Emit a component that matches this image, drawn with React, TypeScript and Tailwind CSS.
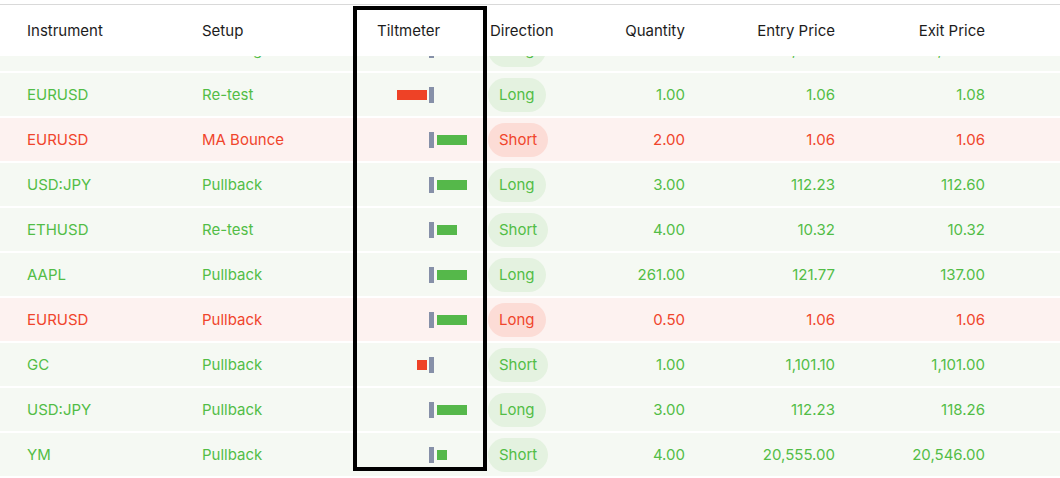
import React from "react";

type Row = {
  inst: string;
  setup: string;
  tilt: number; // negative = red left, positive = green right (px)
  dir: "Long" | "Short";
  qty: string;
  entry: string;
  exit: string;
  win: boolean;
};

const rows: Row[] = [
  { inst: "GC", setup: "Bull Flag", tilt: 10, dir: "Long", qty: "1.00", entry: "1,101.10", exit: "1,101.00", win: true },
  { inst: "EURUSD", setup: "Re-test", tilt: -30, dir: "Long", qty: "1.00", entry: "1.06", exit: "1.08", win: true },
  { inst: "EURUSD", setup: "MA Bounce", tilt: 30, dir: "Short", qty: "2.00", entry: "1.06", exit: "1.06", win: false },
  { inst: "USD:JPY", setup: "Pullback", tilt: 30, dir: "Long", qty: "3.00", entry: "112.23", exit: "112.60", win: true },
  { inst: "ETHUSD", setup: "Re-test", tilt: 20, dir: "Short", qty: "4.00", entry: "10.32", exit: "10.32", win: true },
  { inst: "AAPL", setup: "Pullback", tilt: 30, dir: "Long", qty: "261.00", entry: "121.77", exit: "137.00", win: true },
  { inst: "EURUSD", setup: "Pullback", tilt: 30, dir: "Long", qty: "0.50", entry: "1.06", exit: "1.06", win: false },
  { inst: "GC", setup: "Pullback", tilt: -10, dir: "Short", qty: "1.00", entry: "1,101.10", exit: "1,101.00", win: true },
  { inst: "USD:JPY", setup: "Pullback", tilt: 30, dir: "Long", qty: "3.00", entry: "112.23", exit: "118.26", win: true },
  { inst: "YM", setup: "Pullback", tilt: 10, dir: "Short", qty: "4.00", entry: "20,555.00", exit: "20,546.00", win: true },
];

function Tilt({ v }: { v: number }) {
  return (
    <div className="flex items-center">
      <div className="w-[50px] flex justify-end">
        {v < 0 && <div className="h-[10px] bg-[#ee4226]" style={{ width: -v }} />}
      </div>
      <div className="w-[5px] h-[16px] bg-[#8690a8] ml-[2px]" />
      <div className="ml-[3px] flex">
        {v > 0 && <div className="h-[10px] bg-[#55b84a]" style={{ width: v }} />}
      </div>
    </div>
  );
}

function DataRow({ r }: { r: Row }) {
  const text = r.win ? "text-[#52bd46]" : "text-[#f0452c]";
  const bg = r.win ? "bg-[#f5f9f3]" : "bg-[#fdf2f0]";
  const pill = r.win ? "bg-[#e4f2e0]" : "bg-[#fcdcd6]";
  return (
    <div className={`flex items-center h-[43px] mb-[2px] ${bg} ${text}`}>
      <div className="w-[202px] pl-[27px]">{r.inst}</div>
      <div className="w-[175px]">{r.setup}</div>
      <div className="w-[111px]">
        <Tilt v={r.tilt} />
      </div>
      <div className="w-[100px]">
        <span className={`inline-flex items-center h-[34px] px-[11px] rounded-full ${pill}`}>{r.dir}</span>
      </div>
      <div className="w-[97px] text-right">{r.qty}</div>
      <div className="w-[150px] text-right">{r.entry}</div>
      <div className="w-[150px] text-right">{r.exit}</div>
      <div className="flex-1" />
    </div>
  );
}

export default function App() {
  return (
    <div
      className="relative w-[1060px] h-[478px] bg-white overflow-hidden text-[15px] leading-none"
      style={{ fontFamily: "Inter, 'Noto Sans', sans-serif" }}
    >
      <div className="pt-[4px]">
        <div className="border-t border-[#d9d9d9]" />
        <div className="flex items-center h-[51px] text-[#1c1c1c] bg-white relative z-10">
          <div className="w-[202px] pl-[27px]">Instrument</div>
          <div className="w-[175px]">Setup</div>
          <div className="w-[111px]">Tiltmeter</div>
          <div className="w-[100px] pl-[2px]">Direction</div>
          <div className="w-[97px] text-right">Quantity</div>
          <div className="w-[150px] text-right">Entry Price</div>
          <div className="w-[150px] text-right">Exit Price</div>
          <div className="flex-1" />
        </div>
        <div className="h-[422px] overflow-hidden">
          <div className="-mt-[28px]">
            {rows.map((r, i) => (
              <DataRow key={i} r={r} />
            ))}
          </div>
        </div>
      </div>
      <div className="absolute left-[353px] top-[6px] w-[134px] h-[465px] border-4 border-black pointer-events-none z-20" />
    </div>
  );
}
